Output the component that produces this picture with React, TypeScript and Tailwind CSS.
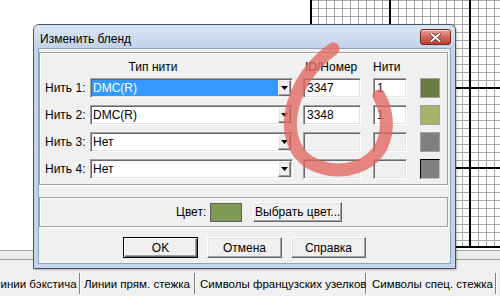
import React from "react";

const sunken =
  "border border-t-[#a0a0a0] border-l-[#a0a0a0] border-r-white border-b-white shadow-[inset_1px_1px_0_#696969,inset_-1px_-1px_0_#e3e3e3]";
const raised =
  "border border-t-white border-l-white border-r-[#696969] border-b-[#696969] shadow-[inset_-1px_-1px_0_#a0a0a0,inset_1px_1px_0_#e3e3e3] bg-[#f0f0f0]";

const threads = [
  { label: "Нить 1:", type: "DMC(R)", id: "3347", count: "1", swatch: "bg-[#6b7b46] border-[#a0a0a0]", on: true, selected: true },
  { label: "Нить 2:", type: "DMC(R)", id: "3348", count: "1", swatch: "bg-[#a4b56b] border-[#a0a0a0]", on: true, selected: false },
  { label: "Нить 3:", type: "Нет", id: "", count: "", swatch: "bg-[#7f7f7f] border-[#a0a0a0]", on: false, selected: false },
  { label: "Нить 4:", type: "Нет", id: "", count: "", swatch: "bg-[#808080] border-t-black border-l-black border-r-[#c0c0c0] border-b-[#c0c0c0]", on: false, selected: false },
];

const tabs = [
  { label: "Линии бэкстича", w: "w-[88px] -ml-[8px] pl-[1px]" },
  { label: "Линии прям. стежка", w: "w-[115px] pl-[4px]" },
  { label: "Символы французских узелков", w: "w-[171px] pl-[5px]" },
  { label: "Символы спец. стежка", w: "w-[130px] pl-[6px]" },
];

function Grid() {
  const v = Array.from({ length: 24 }, (_, i) => i * 8);
  const h = Array.from({ length: 31 }, (_, i) => i * 8);
  return (
    <svg width="190" height="248" className="block">
      <rect width="190" height="248" fill="#fff" />
      {v.map((x) => (
        <line key={"v" + x} x1={x + 0.5} y1={0} x2={x + 0.5} y2={248} stroke="#a8a8a8" strokeWidth={1} />
      ))}
      {h.map((y) => (
        <line key={"h" + y} x1={0} y1={y + 0.5} x2={190} y2={y + 0.5} stroke="#a8a8a8" strokeWidth={1} />
      ))}
      {[1, 80, 160].map((x) => (
        <line key={"V" + x} x1={x} y1={0} x2={x} y2={248} stroke="#000" strokeWidth={2} />
      ))}
      {[88, 168].map((y) => (
        <line key={"H" + y} x1={0} y1={y} x2={190} y2={y} stroke="#000" strokeWidth={2} />
      ))}
      <line x1={0} y1={247} x2={190} y2={247} stroke="#000" strokeWidth={2} />
    </svg>
  );
}

function Arrow() {
  return (
    <div className={`flex h-full w-[13px] items-center justify-center ${raised}`}>
      <svg width="7" height="4" viewBox="0 0 7 4">
        <path d="M0 0h7L3.5 4z" fill="#000" />
      </svg>
    </div>
  );
}

function Button({ children, def }: { children: React.ReactNode; def?: boolean }) {
  return (
    <div
      className={
        def
          ? "flex h-[21px] w-[75px] items-center justify-center border border-black bg-[#f0f0f0] shadow-[inset_1px_1px_0_white,inset_-1px_-1px_0_#696969,inset_-2px_-2px_0_#a0a0a0]"
          : `flex h-[21px] w-[75px] items-center justify-center ${raised}`
      }
    >
      {children}
    </div>
  );
}

export default function App() {
  return (
    <div className="relative h-[296px] w-[500px] overflow-hidden bg-white font-['Liberation_Sans',Arial,sans-serif] text-[12px] leading-[14px] text-black">
      {/* background: canvas + strip + tabs */}
      <div className="flex h-[248px]">
        <div className="w-[310px] bg-white" />
        <Grid />
      </div>
      <div className="h-[10px] border-t border-b border-t-[#a0a0a0] border-b-[#a0a0a0] bg-[#ececec] mt-[2px]" />
      <div className="flex h-[36px] items-start bg-[#f0f0f0] pt-[13px] text-[11.5px]">
        {tabs.map((t) => (
          <div
            key={t.label}
            className={`flex h-[21px] shrink-0 items-center whitespace-nowrap border-r border-r-[#808080] shadow-[1px_0_0_white] ${t.w}`}
          >
            {t.label}
          </div>
        ))}
      </div>

      {/* dialog window */}
      <div className="absolute left-[33px] top-[24px] flex h-[245px] w-[423px] flex-col rounded-t-[6px] border border-[#44546a] bg-[#c4d5ea] shadow-[1px_1px_2px_rgba(0,0,0,0.25)]">
        <div className="flex h-[23px] items-start rounded-t-[5px] bg-linear-to-b from-[#dbe6f3] to-[#c2d3e8]">
          <span className="ml-[6px] mt-[7px] text-[12px] leading-[14px]">Изменить бленд</span>
          <div className="ml-auto mr-[4px] mt-[4px] flex h-[16px] w-[31px] items-center justify-center rounded-[3px] border border-[#6e2a24] bg-linear-to-b from-[#eaa295] via-[#d4685a] to-[#c13e2e] shadow-[inset_0_1px_0_rgba(255,255,255,0.5)]">
            <svg width="11" height="9" viewBox="0 0 11 9">
              <path d="M1.5 1l8 7M9.5 1l-8 7" stroke="#5a1b16" strokeWidth="3.4" strokeLinecap="round" />
              <path d="M1.5 1l8 7M9.5 1l-8 7" stroke="#fff" strokeWidth="2" strokeLinecap="round" />
            </svg>
          </div>
        </div>

        <div className="mx-[4px] mb-[4px] flex flex-1 flex-col border border-[#8fa3bd] bg-[#f0f0f0]">
          {/* threads group */}
          <div className="mr-[2px] mt-[3px] h-[133px] border border-[#a0a0a0] shadow-[inset_1px_1px_0_white,1px_1px_0_white]">
            <div className="mt-[7px] flex h-[14px] items-center">
              <div className="w-[226px] text-center">Тип нити</div>
              <div className="ml-[39px] w-[58px]">ID/Номер</div>
              <div className="ml-[10px]">Нити</div>
            </div>
            <div className="mt-[4px] flex flex-col gap-[7px]">
              {threads.map((t) => (
                <div key={t.label} className="flex h-[20px] items-center pl-[5px]">
                  <div className="w-[45px]">{t.label}</div>
                  <div className={`flex h-[20px] w-[203px] bg-white p-[1px] ${sunken}`}>
                    <div
                      className={`flex flex-1 items-center pl-[1px] ${t.selected ? "bg-[#3399ff] text-white" : ""}`}
                    >
                      {t.type}
                    </div>
                    <Arrow />
                  </div>
                  <div
                    className={`ml-[10px] flex h-[20px] w-[58px] items-center pl-[3px] ${sunken} ${t.on ? "bg-white" : "bg-[#f0f0f0]"}`}
                  >
                    {t.id}
                  </div>
                  <div
                    className={`ml-[12px] flex h-[20px] w-[34px] items-center pl-[3px] ${sunken} ${t.on ? "bg-white" : "bg-[#f0f0f0]"}`}
                  >
                    {t.count}
                  </div>
                  <div className={`ml-[13px] h-[20px] w-[20px] border ${t.swatch}`} />
                </div>
              ))}
            </div>
          </div>

          {/* colour group */}
          <div className="mr-[2px] mt-[12px] flex h-[30px] items-center border border-[#a0a0a0] pl-[136px] shadow-[inset_1px_1px_0_white,1px_1px_0_white]">
            <span>Цвет:</span>
            <div className="ml-[4px] h-[19px] w-[32px] border border-[#606060] bg-[#7e9a55]" />
            <div className={`ml-[11px] flex h-[20px] w-[89px] items-center justify-center ${raised}`}>Выбрать цвет...</div>
          </div>

          {/* buttons */}
          <div className="mt-[10px] flex justify-center gap-[9px]">
            <Button def>OK</Button>
            <Button>Отмена</Button>
            <Button>Справка</Button>
          </div>
        </div>
      </div>

      {/* hand-drawn marker circle */}
      <svg className="pointer-events-none absolute left-0 top-0" width="500" height="296">
        <path
          d="M333 49 C315 62 300 80 293 105 C286 130 292 158 320 167 C345 175 372 166 382 145 C390 128 386 108 379 96"
          fill="none"
          stroke="#e2665f"
          strokeOpacity="0.78"
          strokeWidth="13"
          strokeLinecap="round"
        />
      </svg>
    </div>
  );
}
